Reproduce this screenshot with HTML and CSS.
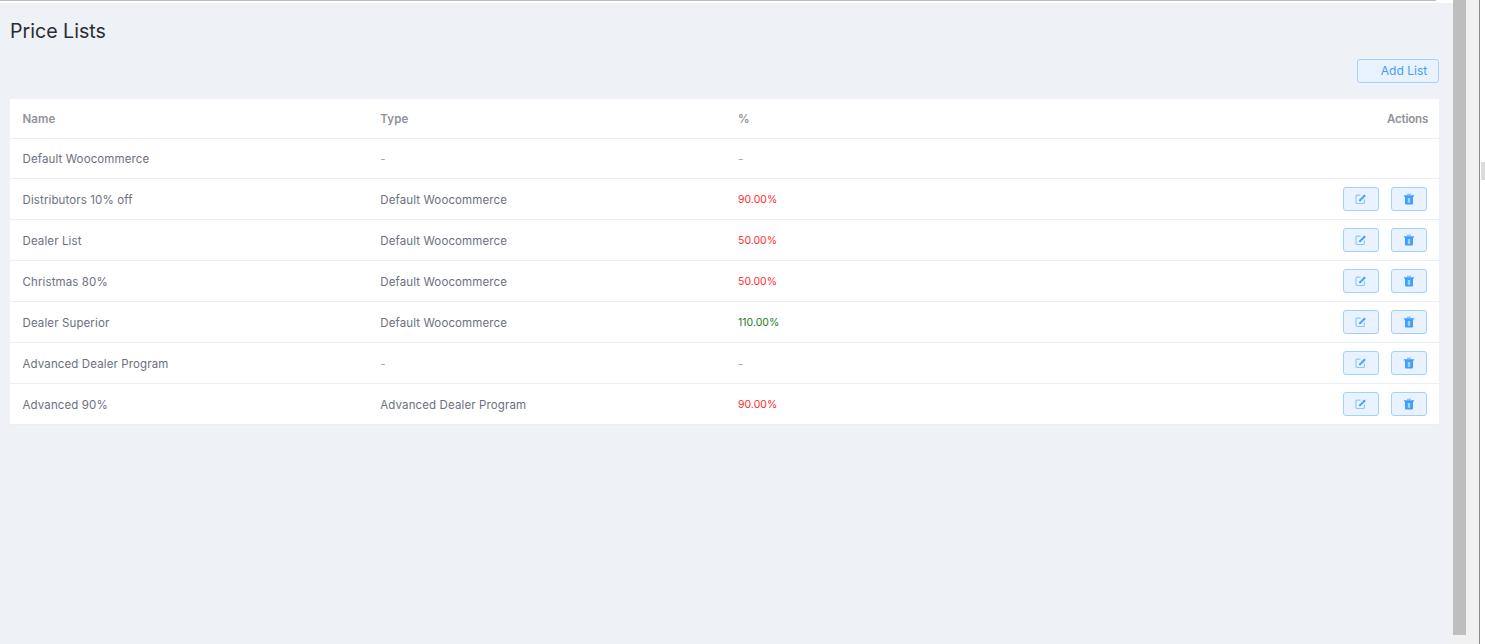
FILE: index.html
```html
<!DOCTYPE html>
<html lang="en">
<head>
    <meta charset="UTF-8">
    <title>Price Lists</title>
    <link rel="stylesheet" href="styles.css">
</head>
<body>
    <div class="page">
        <main class="content">
            <div class="topline"></div>
            <h1>Price Lists</h1>
            <div class="toolbar">
                <button class="btn btn-add" type="button">Add List</button>
            </div>
            <table class="lists">
                <thead>
                    <tr class="short">
                        <th class="col-name">Name</th>
                        <th class="col-type">Type</th>
                        <th class="col-pct">%</th>
                        <th class="col-actions">Actions</th>
                    </tr>
                </thead>
                <tbody>
                    <tr class="short">
                        <td>Default Woocommerce</td>
                        <td class="muted">-</td>
                        <td class="muted">-</td>
                        <td></td>
                    </tr>
                    <tr>
                        <td>Distributors 10% off</td>
                        <td>Default Woocommerce</td>
                        <td class="pct down">90.00%</td>
                        <td class="col-actions">
                            <button class="btn btn-icon" type="button"><svg viewBox="0 0 12 12"><use href="#i-edit"/></svg></button>
                            <button class="btn btn-icon" type="button"><svg viewBox="0 0 12 12"><use href="#i-trash"/></svg></button>
                        </td>
                    </tr>
                    <tr>
                        <td>Dealer List</td>
                        <td>Default Woocommerce</td>
                        <td class="pct down">50.00%</td>
                        <td class="col-actions">
                            <button class="btn btn-icon" type="button"><svg viewBox="0 0 12 12"><use href="#i-edit"/></svg></button>
                            <button class="btn btn-icon" type="button"><svg viewBox="0 0 12 12"><use href="#i-trash"/></svg></button>
                        </td>
                    </tr>
                    <tr>
                        <td>Christmas 80%</td>
                        <td>Default Woocommerce</td>
                        <td class="pct down">50.00%</td>
                        <td class="col-actions">
                            <button class="btn btn-icon" type="button"><svg viewBox="0 0 12 12"><use href="#i-edit"/></svg></button>
                            <button class="btn btn-icon" type="button"><svg viewBox="0 0 12 12"><use href="#i-trash"/></svg></button>
                        </td>
                    </tr>
                    <tr>
                        <td>Dealer Superior</td>
                        <td>Default Woocommerce</td>
                        <td class="pct up">110.00%</td>
                        <td class="col-actions">
                            <button class="btn btn-icon" type="button"><svg viewBox="0 0 12 12"><use href="#i-edit"/></svg></button>
                            <button class="btn btn-icon" type="button"><svg viewBox="0 0 12 12"><use href="#i-trash"/></svg></button>
                        </td>
                    </tr>
                    <tr>
                        <td>Advanced Dealer Program</td>
                        <td class="muted">-</td>
                        <td class="muted">-</td>
                        <td class="col-actions">
                            <button class="btn btn-icon" type="button"><svg viewBox="0 0 12 12"><use href="#i-edit"/></svg></button>
                            <button class="btn btn-icon" type="button"><svg viewBox="0 0 12 12"><use href="#i-trash"/></svg></button>
                        </td>
                    </tr>
                    <tr>
                        <td>Advanced 90%</td>
                        <td>Advanced Dealer Program</td>
                        <td class="pct down">90.00%</td>
                        <td class="col-actions">
                            <button class="btn btn-icon" type="button"><svg viewBox="0 0 12 12"><use href="#i-edit"/></svg></button>
                            <button class="btn btn-icon" type="button"><svg viewBox="0 0 12 12"><use href="#i-trash"/></svg></button>
                        </td>
                    </tr>
                </tbody>
            </table>
        </main>
        <div class="scroll-inner"><div class="scroll-thumb"></div></div>
        <div class="scroll-outer"><div class="scroll-handle"></div></div>
    </div>

    <svg class="sprite" aria-hidden="true">
        <symbol id="i-edit" viewBox="0 0 12 12">
            <path d="M9.4 6.5v3a1 1 0 0 1-1 1H2a1 1 0 0 1-1-1V3.1a1 1 0 0 1 1-1h3.4" fill="none" stroke="#8cc5ff" stroke-width="1.1"/>
            <path d="M3.9 8.3l.4-1.9 5-5 1.5 1.5-5 5z" fill="#409eff"/>
            <path d="M5.4 5.4l1.5 1.5M7 3.8l1.5 1.5" stroke="#b3d8ff" stroke-width=".6"/>
        </symbol>
        <symbol id="i-trash" viewBox="0 0 12 12">
            <path d="M4 .6h4v1.6H4z" fill="#8cc5ff"/>
            <path d="M.9 2.2h10.2v1.3H.9zM2 3.5h8v7.1a1 1 0 0 1-1 1H3a1 1 0 0 1-1-1z" fill="#409eff"/>
            <path d="M4.8 5h2.4v4.8H4.8z" fill="#a9d3ff"/>
        </symbol>
    </svg>
</body>
</html>
```

FILE: styles.css
```css
/* General Styles */
html, body {
    height: 100%;
}

body {
    margin: 0;
    overflow: hidden;
    background: #fff;
    color: #6c7080;
    font-family: Inter, "Noto Sans", sans-serif;
    font-size: 11.5px;
    letter-spacing: .12px;
}

.page {
    display: flex;
    height: 644px;
}

.content {
    width: 1453px;
    flex: none;
    box-sizing: border-box;
    padding: 0 14px 0 10px;
    background: #eef1f6;
}

.topline {
    height: 3px;
    margin: 0 3px 0 -10px;
    border-top: 1px solid #bebebe;
    box-sizing: border-box;
    background: #fff;
    box-shadow: 17px 0 0 #fff;
}

h1 {
    margin: 17px 0 0;
    font-size: 19.6px;
    line-height: 23px;
    font-weight: 400;
    letter-spacing: 0;
    color: #2c2c33;
}

.toolbar {
    display: flex;
    justify-content: flex-end;
    margin-top: 16px;
}

.btn {
    box-sizing: border-box;
    border: 1px solid #a3d0ff;
    border-radius: 3px;
    background: #e8f3ff;
    color: #409eff;
    font-family: inherit;
    padding: 0;
}

.btn-add {
    width: 82px;
    height: 24px;
    padding-left: 12px;
    font-size: 12px;
    line-height: 20px;
}

.btn-icon {
    width: 36px;
    height: 24px;
    margin-left: 9px;
    vertical-align: middle;
}

.btn-icon svg {
    display: block;
    width: 12px;
    height: 12px;
    margin: 0 auto;
}

.lists {
    width: 1429px;
    margin-top: 16px;
    border-collapse: collapse;
    table-layout: fixed;
    background: #fff;
}

.lists th, .lists td {
    height: 40px;
    padding: 0 12px 0 12.5px;
    border-bottom: 1px solid #ebeef5;
    text-align: left;
}

.lists .short th, .lists .short td {
    height: 39px;
}

.lists th {
    font-weight: 600;
    color: #909399;
}

.lists tr:not(.short) td:not(.col-actions) {
    height: 39px;
    padding-top: 1px;
}

.col-name, .col-type { width: 333.25px; }
.col-pct { width: 500px; }

.lists .col-actions {
    text-align: right;
    white-space: nowrap;
}

.lists th.col-actions {
    padding-right: 11px;
    letter-spacing: -.2px;
}

.pct {
    font-size: 10.5px;
    letter-spacing: 0;
}

.muted { color: #a5a8b0; }
.down { color: #ff2d2d; }
.up { color: #1e7b1e; }

.scroll-inner {
    width: 26px;
    flex: none;
    background: #f1f1f1;
}

.scroll-thumb {
    width: 13px;
    height: 635px;
    background: #bebebe;
}

.scroll-outer {
    flex: 1;
    border-left: 1px solid #8a8a8f;
    background: #fff;
    padding: 162px 0 0 1px;
}

.scroll-handle {
    width: 4px;
    height: 18px;
    background: #dcdcdc;
}

.sprite {
    display: none;
}
```
